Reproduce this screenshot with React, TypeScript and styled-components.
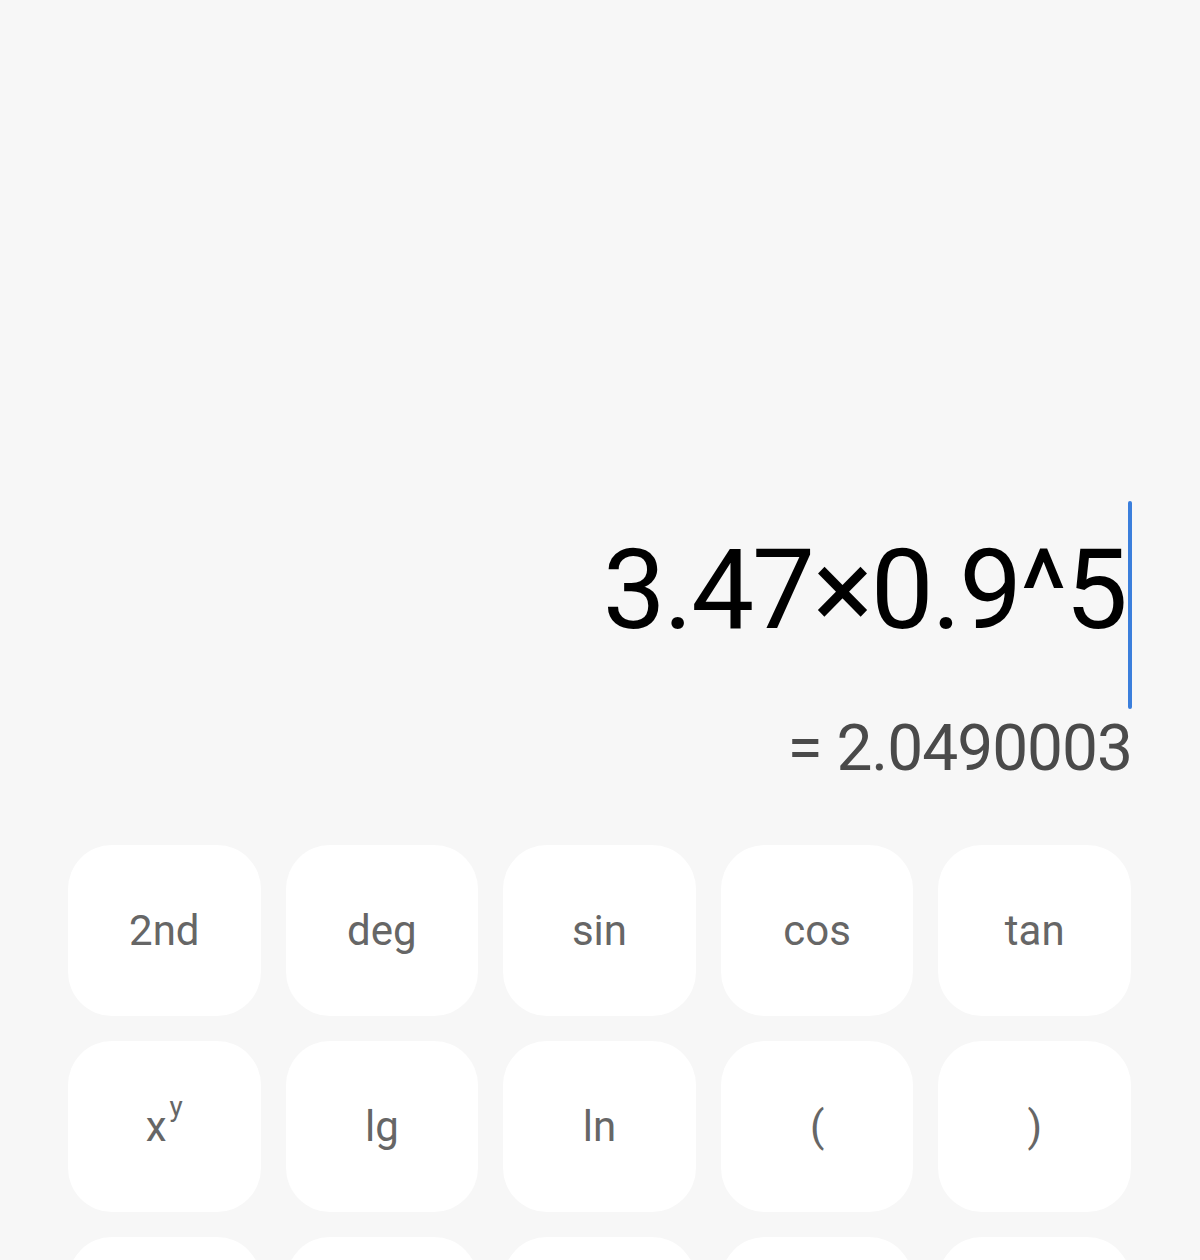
import React from 'react';
import styled, { createGlobalStyle } from 'styled-components';

const GlobalStyle = createGlobalStyle`
    html, body {
        margin: 0;
        padding: 0;
        background: #f7f7f7;
    }
    body {
        font-family: Roboto, "Noto Sans", sans-serif;
    }
`;

const Screen = styled.div`
    height: 1260px;
    overflow: hidden;
    display: flex;
    flex-direction: column;
    background: #f7f7f7;
`;

const Display = styled.div`
    height: 845px;
    box-sizing: border-box;
    display: flex;
    flex-direction: column;
    justify-content: flex-end;
    align-items: flex-end;
    padding: 0 68px 56px 0;
    flex-shrink: 0;
`;

const ExpressionRow = styled.div`
    display: flex;
    align-items: flex-start;
`;

const Expression = styled.span`
    font-size: 112px;
    line-height: 178px;
    color: #000;
    letter-spacing: -2px;
`;

const Cursor = styled.span`
    width: 4px;
    height: 208px;
    border-radius: 2px;
    background: #3b7fdc;
    margin-left: 2px;
`;

const Result = styled.div`
    font-size: 64px;
    line-height: 80px;
    color: #4a4a4a;
    letter-spacing: -1px;
`;

const Keypad = styled.div`
    display: grid;
    grid-template-columns: repeat(5, 1fr);
    grid-auto-rows: 171px;
    gap: 25px;
    padding: 0 69px 0 68px;
`;

const Key = styled.button`
    border: none;
    background: #fff;
    border-radius: 44px;
    font-family: Roboto, "Noto Sans", sans-serif;
    font-size: 42px;
    color: #666;
    display: flex;
    align-items: center;
    justify-content: center;
    padding: 0;
    cursor: pointer;
    sup {
        font-size: 28px;
        vertical-align: 0;
        position: relative;
        top: -20px;
        margin-left: 3px;
    }
`;

// third row only peeks in at the bottom edge, its labels are out of view
const keys: { label: React.ReactNode; name: string }[] = [
    { label: '2nd', name: '2nd' },
    { label: 'deg', name: 'deg' },
    { label: 'sin', name: 'sin' },
    { label: 'cos', name: 'cos' },
    { label: 'tan', name: 'tan' },
    { label: <>x<sup>y</sup></>, name: 'power' },
    { label: 'lg', name: 'lg' },
    { label: 'ln', name: 'ln' },
    { label: '(', name: 'open bracket' },
    { label: ')', name: 'close bracket' },
    { label: null, name: 'square root' },
    { label: null, name: 'clear' },
    { label: null, name: 'backspace' },
    { label: null, name: 'percent' },
    { label: null, name: 'divide' },
];

export default function App() {
    return (
        <>
            <GlobalStyle />
            <Screen>
                <Display>
                    <ExpressionRow>
                        <Expression>3.47×0.9^5</Expression>
                        <Cursor />
                    </ExpressionRow>
                    <Result>= 2.0490003</Result>
                </Display>
                <Keypad>
                    {keys.map(k => (
                        <Key key={k.name} aria-label={k.name}>
                            {k.label}
                        </Key>
                    ))}
                </Keypad>
            </Screen>
        </>
    );
}
